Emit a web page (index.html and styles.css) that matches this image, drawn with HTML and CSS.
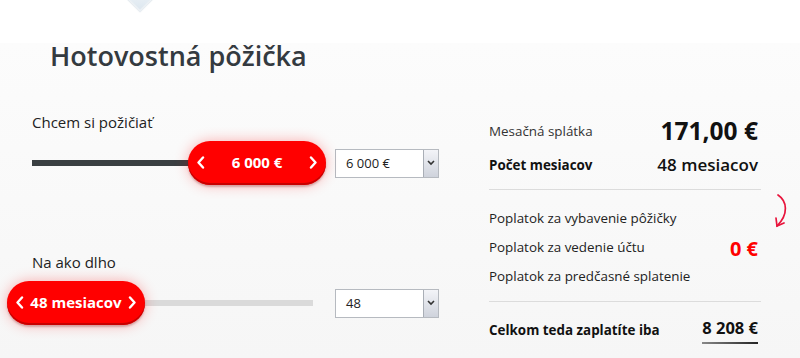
FILE: index.html
```html
<!DOCTYPE html>
<html lang="sk">
<head>
<meta charset="utf-8">
<title>Hotovostná pôžička</title>
<link rel="stylesheet" href="styles.css">
</head>
<body>
<div class="page">
  <div class="pin"></div>
  <h1 class="title">Hotovostná pôžička</h1>
  <div class="calc">
    <div class="left">
      <div class="field">
        <div class="label">Chcem si požičiať</div>
        <div class="slider-row">
          <div class="slider">
            <div class="fill" style="width:158px"></div>
            <div class="thumb" style="left:156px">
              <svg class="chev" width="9" height="13" viewBox="0 0 9 13"><polyline points="7,1.5 2.5,6.5 7,11.5"/></svg>
              <span class="thumb-text">6 000 €</span>
              <svg class="chev" width="9" height="13" viewBox="0 0 9 13"><polyline points="2,1.5 6.5,6.5 2,11.5"/></svg>
            </div>
          </div>
          <div class="select">
            <span class="select-text">6 000 €</span>
            <span class="select-btn"><svg width="8" height="6" viewBox="0 0 8 6"><polyline points="1,1 4,4 7,1"/></svg></span>
          </div>
        </div>
      </div>
      <div class="field field-2">
        <div class="label">Na ako dlho</div>
        <div class="slider-row">
          <div class="slider">
            <div class="fill" style="width:0"></div>
            <div class="thumb" style="left:-25px">
              <svg class="chev" width="9" height="13" viewBox="0 0 9 13"><polyline points="7,1.5 2.5,6.5 7,11.5"/></svg>
              <span class="thumb-text">48 mesiacov</span>
              <svg class="chev" width="9" height="13" viewBox="0 0 9 13"><polyline points="2,1.5 6.5,6.5 2,11.5"/></svg>
            </div>
          </div>
          <div class="select">
            <span class="select-text">48</span>
            <span class="select-btn"><svg width="8" height="6" viewBox="0 0 8 6"><polyline points="1,1 4,4 7,1"/></svg></span>
          </div>
        </div>
      </div>
    </div>
    <div class="right">
      <div class="row row-main">
        <span class="r-label">Mesačná splátka</span>
        <span class="v-big">171,00 €</span>
      </div>
      <div class="row row-months">
        <span class="r-label bold">Počet mesiacov</span>
        <span class="v-mid">48 mesiacov</span>
      </div>
      <div class="divider"></div>
      <div class="fees">
        <ul class="fee-list">
          <li>Poplatok za vybavenie pôžičky</li>
          <li>Poplatok za vedenie účtu</li>
          <li>Poplatok za predčasné splatenie</li>
        </ul>
        <span class="v-zero">0 €</span>
        <svg class="arrow" width="22" height="38" viewBox="0 0 22 38"><path d="M8 3 C17 9, 19 22, 7 34"/><path d="M6 26 L7 34 L14 31"/></svg>
      </div>
      <div class="divider divider-2"></div>
      <div class="row row-total">
        <span class="r-label bold">Celkom teda zaplatíte iba</span>
        <span class="v-total">8 208 €</span>
      </div>
    </div>
  </div>
</div>
</body>
</html>
```

FILE: styles.css
```css
* { box-sizing: border-box; }
html, body { margin: 0; padding: 0; }
body {
  font-family: "Open Sans", "Noto Sans", sans-serif;
  color: #222;
  background: #f6f6f6;
}
.page {
  position: relative;
  width: 800px;
  height: 358px;
  overflow: hidden;
  background: linear-gradient(#ffffff 0, #ffffff 43px, #fcfcfc 43px, #f6f6f6 358px);
}
.pin {
  position: absolute;
  left: 130px;
  top: -13px;
  width: 20px;
  height: 20px;
  transform: rotate(45deg);
  background: linear-gradient(135deg, #f3f7fa, #dde7ef);
  border: 1px solid #e4ebf1;
  box-shadow: 1px 1px 1px rgba(180, 195, 210, 0.4);
}
.title {
  margin: 38px 0 0 50px;
  font-size: 27px;
  line-height: 36px;
  font-weight: 600;
  color: #343a40;
}
.calc {
  display: flex;
  margin-top: 30px;
}
.left {
  width: 489px;
  padding-top: 8px;
}
.label {
  padding-left: 32px;
  font-size: 15px;
  line-height: 20px;
  color: #222;
}
.slider-row {
  display: flex;
  align-items: center;
  height: 44px;
  margin-top: 9px;
  padding-left: 32px;
}
.field-2 { margin-top: 67px; }
.slider {
  position: relative;
  width: 281px;
  height: 6px;
  background: #dadada;
}
.fill {
  height: 100%;
  background: #3a3f42;
}
.thumb {
  position: absolute;
  top: -19px;
  height: 44px;
  width: 138px;
  padding: 0 8px 0 8px;
  display: flex;
  align-items: center;
  justify-content: space-between;
  border-radius: 22px;
  background: #ff0000;
  box-shadow: inset 0 -2px 0 #c80000, 0 2px 2px rgba(110, 0, 0, 0.25), 0 0 14px rgba(255, 0, 0, 0.3);
  color: #fff;
}
.thumb-text {
  font-size: 15px;
  font-weight: 700;
  line-height: 20px;
  margin-top: -2px;
}
.chev { margin-top: -2px; }
.chev polyline {
  fill: none;
  stroke: #fff;
  stroke-width: 2.4;
  stroke-linecap: round;
  stroke-linejoin: round;
}
.select {
  display: flex;
  margin-left: 22px;
  width: 104px;
  height: 29px;
  background: #fff;
  border: 1px solid #b6bac0;
}
.select-text {
  flex: 1;
  padding-left: 10px;
  font-size: 13px;
  line-height: 27px;
  color: #222;
}
.select-btn {
  width: 15px;
  display: flex;
  align-items: center;
  justify-content: center;
  background: linear-gradient(#f3f4f8, #cfd3dc);
  border-left: 1px solid #a9aeb6;
}
.select-btn polyline {
  fill: none;
  stroke: #333;
  stroke-width: 1.6;
}
.right {
  width: 272px;
  padding-top: 12px;
}
.row {
  display: flex;
  align-items: center;
  justify-content: space-between;
  padding-right: 3px;
}
.row-main { height: 30px; }
.row-months { height: 36px; margin-top: 1px; }
.r-label {
  font-size: 13.4px;
  line-height: 20px;
  color: #333;
}
.r-label.bold {
  font-weight: 700;
  color: #111;
}
.v-big {
  font-size: 24.5px;
  font-weight: 700;
  line-height: 30px;
  color: #111;
}
.v-mid {
  font-size: 17px;
  font-weight: 600;
  line-height: 24px;
  color: #111;
}
.divider {
  margin-top: 6px;
  height: 1px;
  background: #dcdcdc;
}
.divider-2 { margin-top: 10px; }
.fees {
  position: relative;
  display: flex;
  align-items: center;
  justify-content: space-between;
  margin-top: 14px;
  padding-right: 3px;
}
.fee-list {
  list-style: none;
  margin: 0;
  padding: 0;
  font-size: 13.4px;
  line-height: 29px;
  color: #222;
}
.v-zero {
  font-size: 20px;
  font-weight: 700;
  color: #ff0000;
  margin-top: 2px;
}
.arrow {
  position: absolute;
  left: 281px;
  top: -12px;
}
.arrow path {
  fill: none;
  stroke: #e8143c;
  stroke-width: 1.7;
  stroke-linecap: round;
}
.row-total {
  margin-top: 13px;
  height: 30px;
}
.v-total {
  font-size: 16.5px;
  font-weight: 700;
  line-height: 20px;
  padding-bottom: 4px;
  border-bottom: 2px solid transparent;
  border-image: linear-gradient(to right, #8a8a8a, #222) 1;
  color: #111;
  margin-top: 2px;
}
```
